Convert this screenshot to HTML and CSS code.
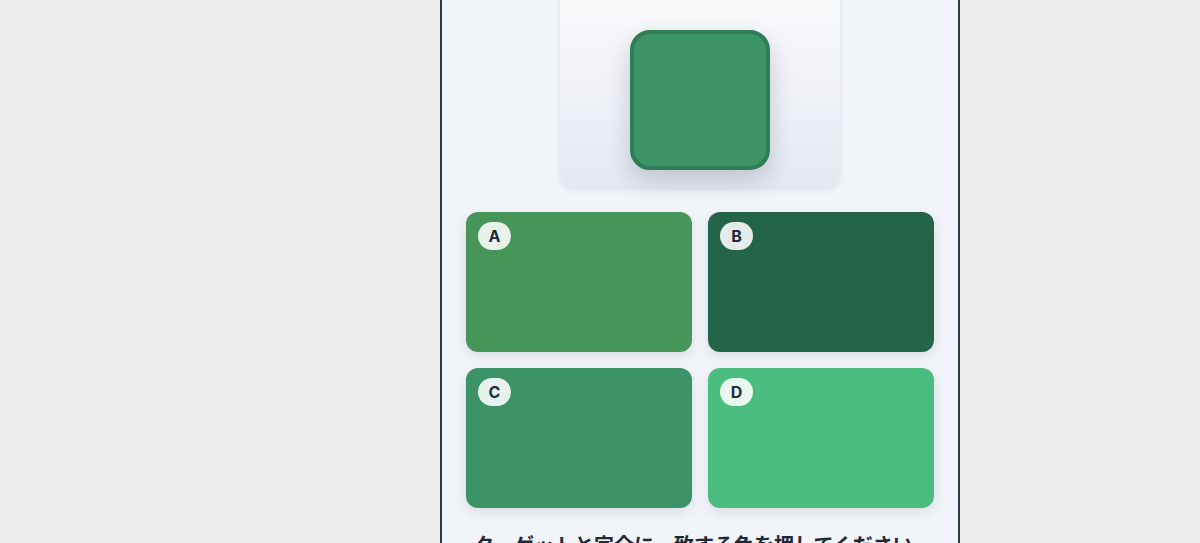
FILE: index.html
```html
<!DOCTYPE html>
<html lang="ja">
<head>
  <meta charset="UTF-8" />
  <meta name="viewport" content="width=device-width, initial-scale=1.0"/>
  <title>色あわせ</title>
  <link rel="stylesheet" href="styles.css">
</head>
<body>
  <div class="phone">
    <!-- target colour -->
    <div class="target-panel">
      <div class="target-swatch"></div>
    </div>

    <!-- answer choices -->
    <div class="choices">
      <button class="choice" style="background-color: #46965a;"><span class="tag">A</span></button>
      <button class="choice" style="background-color: #24654a;"><span class="tag">B</span></button>
      <button class="choice" style="background-color: #3b9367;"><span class="tag">C</span></button>
      <button class="choice" style="background-color: #4bbd7e;"><span class="tag">D</span></button>
    </div>

    <p class="prompt">ターゲットと完全に一致する色を押してください</p>
  </div>
</body>
</html>
```
FILE: styles.css
```css
body {
  margin: 0;
  background-color: #eeeeee;
  font-family: Inter, "Noto Sans CJK JP", sans-serif;
  overflow: hidden;
}

.phone {
  width: 520px;
  margin-left: 440px;
  min-height: 600px;
  background: #f1f4f9;
  border-left: 2px solid #2d3b4f;
  border-right: 2px solid #2d3b4f;
  padding: 0 24px;
  box-sizing: border-box;
}

.target-panel {
  width: 280px;
  margin: -20px auto 0;
  padding: 50px 0 18px;
  display: flex;
  justify-content: center;
  border-radius: 14px;
  background: linear-gradient(180deg, #fcfcfd 0%, #e3e8f0 100%);
  box-shadow: 0 2px 6px rgba(15, 23, 42, 0.08);
}

.target-swatch {
  width: 140px;
  height: 140px;
  box-sizing: border-box;
  background: #3b9367;
  border: 4px solid #2f7d57;
  border-radius: 20px;
  box-shadow: 0 10px 24px rgba(15, 23, 42, 0.18);
}

.choices {
  margin-top: 24px;
  display: grid;
  grid-template-columns: 1fr 1fr;
  gap: 16px;
}

.choice {
  height: 140px;
  border: none;
  border-radius: 12px;
  padding: 10px 12px;
  display: flex;
  align-items: flex-start;
  cursor: pointer;
  box-shadow: 0 4px 12px rgba(15, 23, 42, 0.1);
}

.tag {
  min-width: 33px;
  height: 28px;
  padding: 0 10px;
  box-sizing: border-box;
  display: flex;
  align-items: center;
  justify-content: center;
  border-radius: 14px;
  background: rgba(255, 255, 255, 0.88);
  color: #1f2a3c;
  font-family: Inter, sans-serif;
  font-weight: 700;
  font-size: 16px;
}

.prompt {
  margin: 24px 0 0;
  padding: 0 8px;
  font-size: 20px;
  font-weight: 700;
  color: #1f2937;
  line-height: 28px;
}
```
